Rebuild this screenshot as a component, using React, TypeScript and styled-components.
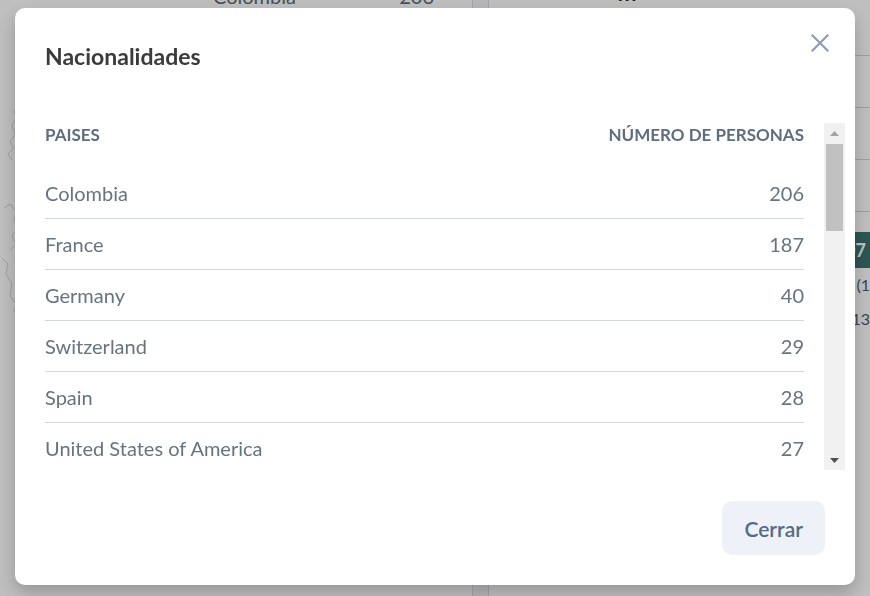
import React from "react";
import styled, { createGlobalStyle } from "styled-components";

const GlobalStyle = createGlobalStyle`
  html, body { margin: 0; padding: 0; }
  body {
    font-family: Lato, "Noto Sans", sans-serif;
    background: #f4f5f7;
    width: 870px;
    height: 596px;
    overflow: hidden;
  }
`;

/* ---------- background page ---------- */
const Page = styled.div`
  display: grid;
  grid-template-columns: 473px 1fr;
  gap: 15px;
  margin-top: -16px;
  height: 620px;
`;

const LeftCard = styled.section`
  background: #ffffff;
  border-right: 1px solid #d8dce2;
  display: flex;
  flex-direction: column;
`;

const LeftRow = styled.div`
  display: flex;
  justify-content: space-between;
  padding: 0 38px 0 213px;
  font-size: 20px;
  line-height: 24px;
  color: #5d6b7a;
`;

const MapBox = styled.div`
  margin-top: 100px;
  padding-left: 2px;
`;

const RightCard = styled.section`
  background: #ffffff;
  border-left: 1px solid #d8dce2;
  display: flex;
  flex-direction: column;
`;

const RightTop = styled.div`
  padding-left: 129px;
  font-size: 18px;
  font-weight: 900;
  line-height: 20px;
  color: #222;
  letter-spacing: 2px;
`;

const RightLine = styled.div`
  height: 51px;
  border-bottom: 1px solid #d2d6dc;
`;

const TealBar = styled.div`
  margin-top: 20px;
  height: 36px;
  background: #3a7370;
  color: #fff;
  font-weight: 700;
  font-size: 18px;
  display: flex;
  align-items: center;
  justify-content: flex-end;
  padding-right: 4px;
`;

const RightText = styled.div`
  font-size: 16px;
  color: #4e5d6c;
  line-height: 34px;
  text-align: right;
  white-space: nowrap;
  overflow: hidden;
`;

/* ---------- overlay / modal ---------- */
const Overlay = styled.div`
  position: fixed;
  inset: 0;
  background: rgba(0, 0, 0, 0.25);
  display: flex;
  justify-content: center;
  align-items: flex-start;
  padding-top: 8px;
`;

const Modal = styled.div`
  position: relative;
  width: 840px;
  height: 577px;
  background: #ffffff;
  border-radius: 10px;
  box-shadow: 0 8px 18px rgba(0, 0, 0, 0.22);
  display: flex;
  flex-direction: column;
`;

const Header = styled.header`
  height: 115px;
  padding: 34px 30px 0;
  box-sizing: border-box;
`;

const Title = styled.h2`
  margin: 0;
  font-size: 23px;
  line-height: 28px;
  font-weight: 700;
  color: #3b3b3b;
`;

const CloseButton = styled.button`
  position: absolute;
  top: 26px;
  right: 26px;
  width: 18px;
  height: 18px;
  padding: 0;
  border: none;
  background: transparent;
  cursor: pointer;
  display: flex;
`;

const ScrollFrame = styled.div`
  display: flex;
  height: 347px;
  margin: 0 10px 0 30px;
`;

const ScrollArea = styled.div`
  flex: 1;
  overflow-y: auto;
  scrollbar-width: none;
  &::-webkit-scrollbar { display: none; }
`;

const Scrollbar = styled.div`
  width: 21px;
  background: #f1f1f1;
  display: flex;
  flex-direction: column;
`;

const ArrowButton = styled.div`
  height: 20px;
  display: flex;
  align-items: center;
  justify-content: center;
`;

const Thumb = styled.div`
  height: 87px;
  margin: 1px 2px 0;
  background: #c1c1c1;
`;

const TrackRest = styled.div`
  flex: 1;
`;

const Table = styled.div`
  padding-right: 20px;
`;

const HeadRow = styled.div`
  display: flex;
  justify-content: space-between;
  height: 45px;
  font-size: 17px;
  line-height: 24px;
  font-weight: 700;
  color: #5f6e7e;
  text-transform: uppercase;
`;

const Row = styled.div`
  display: flex;
  justify-content: space-between;
  align-items: center;
  height: 50px;
  border-bottom: 1px solid #d3d8de;
  font-size: 20px;
  color: #67737f;
`;

const Footer = styled.footer`
  flex: 1;
  display: flex;
  justify-content: flex-end;
  align-items: flex-end;
  padding: 0 30px 30px;
`;

const Button = styled.button`
  height: 54px;
  padding: 0 22px;
  border: none;
  border-radius: 10px;
  background: #eef2f8;
  color: #566b82;
  font-family: Lato, "Noto Sans", sans-serif;
  font-size: 21px;
  font-weight: 600;
  cursor: pointer;
`;

const rows: [string, number][] = [
  ["Colombia", 206],
  ["France", 187],
  ["Germany", 40],
  ["Switzerland", 29],
  ["Spain", 28],
  ["United States of America", 27],
  ["Italy", 22],
  ["Belgium", 18],
  ["Canada", 15],
  ["Mexico", 14],
  ["United Kingdom", 13],
  ["Netherlands", 11],
  ["Argentina", 10],
  ["Brazil", 9],
  ["Peru", 8],
  ["Ecuador", 7],
  ["Venezuela", 6],
  ["Chile", 5],
  ["Portugal", 4],
  ["Austria", 3],
  ["Japan", 2],
  ["Sweden", 1],
  ["Norway", 1],
];

export default function App() {
  return (
    <>
      <GlobalStyle />
      <Page>
        <LeftCard>
          <LeftRow>
            <span>Colombia</span>
            <span>206</span>
          </LeftRow>
          <MapBox>
            <svg width="30" height="260" viewBox="0 0 30 260" fill="none" stroke="#d6d6d6" strokeWidth="1">
              <path d="M12 2 L14 10 L10 18 L13 26 L8 34 L12 40 L6 46 L10 52" />
              <path d="M2 100 L8 96 L14 104 L12 112 L16 120 L10 128 L14 136 L8 142" />
              <path d="M0 150 L6 156 L4 166 L10 176 L8 188 L14 196 L12 204" />
            </svg>
          </MapBox>
        </LeftCard>
        <RightCard>
          <RightTop>ııı</RightTop>
          <RightLine />
          <RightLine />
          <RightLine />
          <RightLine />
          <TealBar>207</TealBar>
          <RightText>Total de personas (1</RightText>
          <RightText>Promedio [13</RightText>
        </RightCard>
      </Page>
      <Overlay>
        <Modal role="dialog" aria-label="Nacionalidades">
          <Header>
            <Title>Nacionalidades</Title>
          </Header>
          <CloseButton aria-label="Cerrar">
            <svg width="18" height="18" viewBox="0 0 18 18" fill="none" stroke="#8d9db2" strokeWidth="2.2" strokeLinecap="square">
              <path d="M1.5 1.5 L16.5 16.5 M16.5 1.5 L1.5 16.5" />
            </svg>
          </CloseButton>
          <ScrollFrame>
            <ScrollArea>
              <Table>
                <HeadRow>
                  <span>Paises</span>
                  <span>Número de personas</span>
                </HeadRow>
                {rows.map(([name, n]) => (
                  <Row key={name}>
                    <span>{name}</span>
                    <span>{n}</span>
                  </Row>
                ))}
              </Table>
            </ScrollArea>
            <Scrollbar aria-hidden="true">
              <ArrowButton>
                <svg width="9" height="5" viewBox="0 0 9 5">
                  <polygon points="4.5,0 9,5 0,5" fill="#a3a3a3" />
                </svg>
              </ArrowButton>
              <Thumb />
              <TrackRest />
              <ArrowButton>
                <svg width="9" height="5" viewBox="0 0 9 5">
                  <polygon points="0,0 9,0 4.5,5" fill="#505050" />
                </svg>
              </ArrowButton>
            </Scrollbar>
          </ScrollFrame>
          <Footer>
            <Button>Cerrar</Button>
          </Footer>
        </Modal>
      </Overlay>
    </>
  );
}
